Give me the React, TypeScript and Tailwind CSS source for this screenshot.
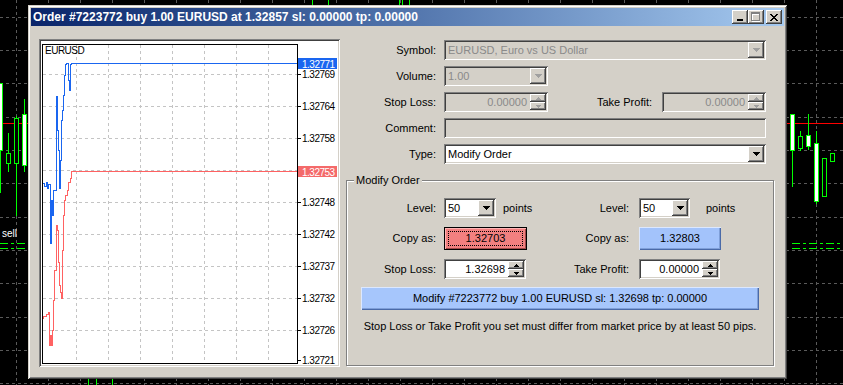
import React from "react";

const raised =
  "shadow-[inset_-1px_-1px_0_#404040,inset_1px_1px_0_#ffffff,inset_-2px_-2px_0_#808080,inset_2px_2px_0_#d4d0c8]";
const sunken =
  "shadow-[inset_1px_1px_0_#808080,inset_-1px_-1px_0_#ffffff,inset_2px_2px_0_#404040,inset_-2px_-2px_0_#d4d0c8]";

function DownArrow({ color = "#000" }: { color?: string }) {
  return (
    <svg width="7" height="4" viewBox="0 0 7 4" shapeRendering="crispEdges">
      <path d="M0 0h7v1H0z M1 1h5v1H1z M2 2h3v1H2z M3 3h1v1H3z" fill={color} />
    </svg>
  );
}

function SmallArrow({ up, color = "#000" }: { up?: boolean; color?: string }) {
  return (
    <svg width="5" height="3" viewBox="0 0 5 3" shapeRendering="crispEdges">
      {up ? (
        <path d="M2 0h1v1H2z M1 1h3v1H1z M0 2h5v1H0z" fill={color} />
      ) : (
        <path d="M0 0h5v1H0z M1 1h3v1H1z M2 2h1v1H2z" fill={color} />
      )}
    </svg>
  );
}

function Combo({
  w,
  value,
  disabled,
}: {
  w: string;
  value: string;
  disabled?: boolean;
}) {
  return (
    <div
      className={`${w} h-[20px] flex items-center p-[2px] ${sunken} ${
        disabled ? "bg-[#d4d0c8] text-[#8a8a8a]" : "bg-white text-black"
      }`}
    >
      <span className="flex-1 pl-[2px] leading-none whitespace-nowrap overflow-hidden">
        {value}
      </span>
      <div
        className={`w-[16px] h-[16px] shrink-0 flex items-center justify-center bg-[#d4d0c8] ${raised}`}
      >
        <DownArrow color={disabled ? "#a0a0a0" : "#000"} />
      </div>
    </div>
  );
}

function Spinner({
  w,
  value,
  disabled,
}: {
  w: string;
  value: string;
  disabled?: boolean;
}) {
  return (
    <div
      className={`${w} h-[20px] flex items-center p-[2px] ${sunken} ${
        disabled ? "bg-[#d4d0c8] text-[#8a8a8a]" : "bg-white text-black"
      }`}
    >
      <span className="flex-1 text-right pr-[3px] leading-none">{value}</span>
      <div className="w-[16px] h-[16px] shrink-0 flex flex-col">
        <div
          className={`h-[8px] flex items-center justify-center bg-[#d4d0c8] ${raised}`}
        >
          <SmallArrow up color={disabled ? "#a0a0a0" : "#000"} />
        </div>
        <div
          className={`h-[8px] flex items-center justify-center bg-[#d4d0c8] ${raised}`}
        >
          <SmallArrow color={disabled ? "#a0a0a0" : "#000"} />
        </div>
      </div>
    </div>
  );
}

function Backdrop() {
  const hs = [17, 50, 83, 117, 150, 183, 217, 250, 283, 317, 350, 383];
  const vs: number[] = [];
  for (let x = 16; x < 843; x += 32) vs.push(x);
  const g = "#00ff00";
  return (
    <svg
      className="absolute inset-0"
      width="843"
      height="385"
      viewBox="0 0 843 385"
      shapeRendering="crispEdges"
    >
      <rect x="0" y="0" width="843" height="385" fill="#000" />
      {hs.map((y) => (
        <line key={"h" + y} x1="0" x2="843" y1={y + 0.5} y2={y + 0.5} stroke="#5a5a5a" strokeDasharray="3 3" />
      ))}
      {vs.map((x) => (
        <line key={"v" + x} x1={x + 0.5} x2={x + 0.5} y1="0" y2="385" stroke="#5a5a5a" strokeDasharray="3 3" />
      ))}
      <line x1="0" x2="843" y1="123.5" y2="123.5" stroke="#ff0000" />
      <line x1="0.5" x2="0.5" y1="150" y2="193" stroke={g} />
      <rect x="-1.5" y="83.5" width="4" height="67" fill="#fff" stroke={g} />
      <line x1="8.5" x2="8.5" y1="133" y2="172" stroke={g} />
      <rect x="6.5" y="153.5" width="4" height="10" fill="#000" stroke={g} />
      <line x1="16.5" x2="16.5" y1="116" y2="216" stroke={g} />
      <rect x="14.5" y="118.5" width="4" height="45" fill="#000" stroke={g} />
      <line x1="24.5" x2="24.5" y1="99" y2="172" stroke={g} />
      <rect x="22.5" y="114.5" width="4" height="51" fill="#fff" stroke={g} />
      <text x="2" y="237" fill="#fff" fontSize="10" fontFamily="Liberation Sans, sans-serif">
        sell
      </text>
      <line x1="0" x2="28" y1="243.5" y2="243.5" stroke={g} strokeDasharray="8 3 3 3" />
      <line x1="0" x2="28" y1="248.5" y2="248.5" stroke={g} strokeDasharray="8 3 3 3" />
      <line x1="792.5" x2="792.5" y1="150" y2="187" stroke={g} />
      <rect x="790.5" y="114.5" width="4" height="36" fill="#fff" stroke={g} />
      <line x1="800.5" x2="800.5" y1="131" y2="151" stroke={g} />
      <rect x="798.5" y="136.5" width="4" height="12" fill="#000" stroke={g} />
      <line x1="808.5" x2="808.5" y1="114" y2="150" stroke={g} />
      <rect x="806.5" y="135.5" width="4" height="11" fill="#fff" stroke={g} />
      <line x1="816.5" x2="816.5" y1="131" y2="204" stroke={g} />
      <rect x="814.5" y="143.5" width="4" height="58" fill="#fff" stroke={g} />
      <rect x="822.5" y="158.5" width="4" height="38" fill="#000" stroke={g} />
      <rect x="830.5" y="153.5" width="4" height="8" fill="#000" stroke={g} />
      <line x1="792" x2="843" y1="243.5" y2="243.5" stroke={g} strokeDasharray="8 3 3 3" />
      <line x1="792" x2="843" y1="248.5" y2="248.5" stroke={g} strokeDasharray="8 3 3 3" />
      <line x1="312.5" x2="312.5" y1="0" y2="6" stroke={g} />
      <line x1="328.5" x2="328.5" y1="0" y2="6" stroke={g} />
      <line x1="399.5" x2="399.5" y1="0" y2="6" stroke={g} />
      <line x1="402.5" x2="402.5" y1="0" y2="6" stroke={g} />
      <line x1="409.5" x2="409.5" y1="0" y2="6" stroke={g} />
      <line x1="88.5" x2="88.5" y1="378" y2="385" stroke={g} />
      <line x1="96.5" x2="96.5" y1="378" y2="385" stroke={g} />
      <line x1="112.5" x2="112.5" y1="378" y2="385" stroke={g} />
    </svg>
  );
}

function stepPath(pts: [number, number][]) {
  let d = `M${pts[0][0] + 0.5} ${pts[0][1] + 0.5}`;
  for (let i = 1; i < pts.length; i++) {
    d += ` V${pts[i][1] + 0.5} H${pts[i][0] + 0.5}`;
  }
  return d;
}

function Chart() {
  const vx = [35, 67, 99, 131, 163, 195, 227];
  const hy = [33, 65, 97, 129, 161, 193, 225, 257, 289];
  const labels: [string, number][] = [
    ["1.32769", 33],
    ["1.32764", 65],
    ["1.32758", 97],
    ["1.32748", 161],
    ["1.32742", 193],
    ["1.32737", 225],
    ["1.32732", 257],
    ["1.32726", 289],
    ["1.32721", 319],
  ];
  const blue: [number, number][] = [
    [2, 141], [3, 142], [5, 145], [6, 141], [7, 147], [9, 143], [10, 202], [11, 159],
    [12, 174], [13, 149], [15, 149], [15, 59], [16, 55], [17, 89], [18, 109], [19, 147],
    [20, 119], [21, 79], [22, 69], [23, 54], [24, 34], [25, 23], [27, 22], [28, 39],
    [29, 49], [30, 23], [32, 22], [255, 22],
  ];
  const red: [number, number][] = [
    [2, 277], [5, 275], [7, 273], [8, 271], [9, 304], [10, 294], [11, 304], [12, 289],
    [13, 259], [15, 229], [16, 184], [17, 189], [18, 221], [19, 244], [20, 251], [21, 257],
    [22, 209], [23, 174], [24, 159], [26, 154], [27, 149], [29, 141], [30, 137], [31, 130],
    [32, 130], [255, 130],
  ];
  const font = "Liberation Sans, Arial, sans-serif";
  return (
    <div className={`w-[301px] h-[328px] p-[2px] bg-white ${sunken}`}>
      <svg width="297" height="324" viewBox="0 0 297 324">
        <g shapeRendering="crispEdges">
          {vx.map((x) => (
            <line key={x} x1={x + 0.5} x2={x + 0.5} y1="4" y2="322" stroke="#c4c4c4" strokeDasharray="3 3" />
          ))}
          {hy.map((y) => (
            <line key={y} x1="2" x2="256" y1={y + 0.5} y2={y + 0.5} stroke="#c4c4c4" strokeDasharray="3 3" />
          ))}
          <rect x="1.5" y="3.5" width="255" height="319" fill="none" stroke="#000" />
          {[...hy, 319].map((y) => (
            <line key={"t" + y} x1="256" x2="260" y1={y + 0.5} y2={y + 0.5} stroke="#000" />
          ))}
          <path d={stepPath(blue)} fill="none" stroke="#1a66f0" strokeWidth="1" />
          <path d={stepPath(red)} fill="none" stroke="#ff6262" strokeWidth="1" />
          <rect x="257" y="17" width="39" height="11" fill="#1a66f0" />
          <rect x="257" y="125" width="39" height="11" fill="#f46a6a" />
        </g>
        <text x="4" y="13" fontSize="10" letterSpacing="-0.5" fontFamily={font} fill="#000">
          EURUSD
        </text>
        {labels.map(([t, y]) => (
          <text key={t} x="261" y={y + 4} fontSize="10" letterSpacing="-0.5" fontFamily={font} fill="#000">
            {t}
          </text>
        ))}
        <text x="261" y="26.5" fontSize="10" letterSpacing="-0.5" fontFamily={font} fill="#fff">
          1.32771
        </text>
        <text x="261" y="134.5" fontSize="10" letterSpacing="-0.5" fontFamily={font} fill="#fff">
          1.32753
        </text>
      </svg>
    </div>
  );
}

function TitleBar() {
  return (
    <div className="h-[18px] flex items-center bg-gradient-to-r from-[#0a246a] to-[#a6caf0] pl-[2px] pr-[2px]">
      <span className="flex-1 text-white font-bold text-[12px] leading-none whitespace-nowrap">
        Order #7223772 buy 1.00 EURUSD at 1.32857 sl: 0.00000 tp: 0.00000
      </span>
      <div className="flex items-center">
        <div className={`w-[16px] h-[14px] bg-[#d4d0c8] flex items-center justify-center ${raised}`}>
          <svg width="8" height="7" viewBox="0 0 8 7" shapeRendering="crispEdges">
            <path d="M1 5h6v2H1z" fill="#000" />
          </svg>
        </div>
        <div className={`w-[16px] h-[14px] bg-[#d4d0c8] flex items-center justify-center ${raised}`}>
          <svg width="10" height="10" viewBox="0 0 10 10" shapeRendering="crispEdges">
            <path d="M1 1h8v9H1z M2 3v6h6V3z" fill="#fff" fillRule="evenodd" />
            <path d="M0 0h9v9H0z M1 2v6h7V2z" fill="#808080" fillRule="evenodd" />
          </svg>
        </div>
        <div className={`ml-[2px] w-[16px] h-[14px] bg-[#d4d0c8] flex items-center justify-center ${raised}`}>
          <svg width="8" height="7" viewBox="0 0 8 7" shapeRendering="crispEdges">
            <path
              d="M0 0h2v1H0z M6 0h2v1H6z M1 1h2v1H1z M5 1h2v1H5z M2 2h4v1H2z M3 3h2v1H3z M2 4h4v1H2z M1 5h2v1H1z M5 5h2v1H5z M0 6h2v1H0z M6 6h2v1H6z"
              fill="#000"
            />
          </svg>
        </div>
      </div>
    </div>
  );
}

function Row({ label, children }: { label: string; children: React.ReactNode }) {
  return (
    <div className="flex items-center h-[20px]">
      <span className="w-[90px] text-right">{label}</span>
      <div className="ml-[8px] flex items-center">{children}</div>
    </div>
  );
}

export default function App() {
  return (
    <div className="relative w-[843px] h-[385px] overflow-hidden bg-black font-['Liberation_Sans',Arial,sans-serif] text-[11px] text-black">
      <Backdrop />
      <div className="absolute left-[28px] top-[5px] w-[759px] h-[374px] bg-[#d4d0c8] p-[3px] shadow-[inset_1px_1px_0_#d4d0c8,inset_-1px_-1px_0_#404040,inset_2px_2px_0_#ffffff,inset_-2px_-2px_0_#808080]">
        <TitleBar />
        <div className="flex pt-[13px] pl-[8px]">
          <Chart />
          <div className="ml-[6px] w-[430px] flex flex-col mt-[1px]">
            <div className="flex flex-col gap-[6px]">
              <Row label="Symbol:">
                <Combo w="w-[322px]" value="EURUSD, Euro vs US Dollar" disabled />
              </Row>
              <Row label="Volume:">
                <Combo w="w-[104px]" value="1.00" disabled />
              </Row>
              <Row label="Stop Loss:">
                <Spinner w="w-[104px]" value="0.00000" disabled />
                <span className="w-[104px] text-right">Take Profit:</span>
                <div className="ml-[10px]">
                  <Spinner w="w-[104px]" value="0.00000" disabled />
                </div>
              </Row>
              <Row label="Comment:">
                <div className={`w-[322px] h-[20px] bg-[#d4d0c8] ${sunken}`} />
              </Row>
              <Row label="Type:">
                <Combo w="w-[322px]" value="Modify Order" />
              </Row>
            </div>

            <div className="relative mt-[16px] w-[428px] h-[186px] border border-[#808080] shadow-[1px_1px_0_#ffffff,inset_1px_1px_0_#ffffff] pt-[17px] flex flex-col">
              <span className="absolute top-[-8px] left-[7px] px-[2px] bg-[#d4d0c8] leading-[14px]">
                Modify Order
              </span>
              <div className="flex items-center h-[20px]">
                <span className="w-[89px] text-right">Level:</span>
                <div className="ml-[8px] w-[102px] flex items-center">
                  <Combo w="w-[52px]" value="50" />
                  <span className="ml-[7px]">points</span>
                </div>
                <span className="w-[83px] text-right">Level:</span>
                <div className="ml-[10px] flex items-center">
                  <Combo w="w-[51px]" value="50" />
                  <span className="ml-[16px]">points</span>
                </div>
              </div>

              <div className="flex items-center h-[23px] mt-[9px]">
                <span className="w-[89px] text-right">Copy as:</span>
                <div className="ml-[8px] w-[102px] flex items-center">
                  <div className="w-[83px] h-[23px] flex p-[3px] bg-[#f28080] border border-black shadow-[inset_1px_1px_0_#ffb4b4,inset_-1px_-1px_0_#a04848]">
                    <span className="flex-1 flex items-center justify-center border border-dotted border-black">
                      1.32703
                    </span>
                  </div>
                </div>
                <span className="w-[83px] text-right">Copy as:</span>
                <div className="ml-[10px] flex items-center">
                  <div className="w-[82px] h-[23px] flex items-center justify-center bg-[#a3c3fb] shadow-[inset_1px_1px_0_#dce8ff,inset_-1px_-1px_0_#4a6aa8,inset_-2px_-2px_0_#7f9fd8]">
                    1.32803
                  </div>
                </div>
              </div>

              <div className="flex items-center h-[20px] mt-[9px]">
                <span className="w-[89px] text-right">Stop Loss:</span>
                <div className="ml-[8px] w-[102px] flex items-center">
                  <Spinner w="w-[82px]" value="1.32698" />
                </div>
                <span className="w-[83px] text-right">Take Profit:</span>
                <div className="ml-[10px] flex items-center">
                  <Spinner w="w-[81px]" value="0.00000" />
                </div>
              </div>

              <div className="ml-[14px] mt-[8px] w-[398px] h-[23px] flex items-center justify-center bg-[#a6c6fc] shadow-[inset_1px_1px_0_#dce8ff,inset_-1px_-1px_0_#4a6aa8,inset_-2px_-2px_0_#7f9fd8]">
                Modify #7223772 buy 1.00 EURUSD sl: 1.32698 tp: 0.00000
              </div>

              <div className="mt-[9px] text-center leading-[14px]">
                Stop Loss or Take Profit you set must differ from market price by at least 50 pips.
              </div>
            </div>
          </div>
        </div>
      </div>
    </div>
  );
}
